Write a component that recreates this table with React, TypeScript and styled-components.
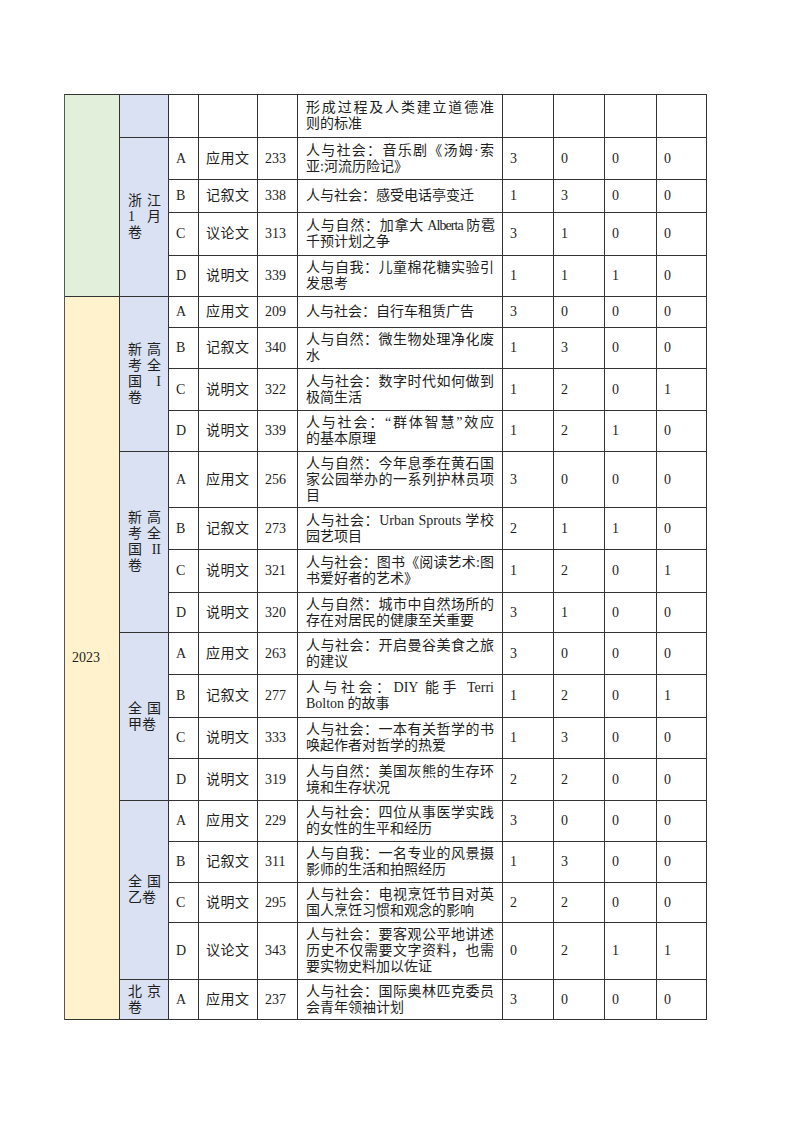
import React from 'react';
import styled, { createGlobalStyle } from 'styled-components';

const GlobalStyle = createGlobalStyle`
  html, body {
    margin: 0;
    padding: 0;
    background: #fff;
  }
  body {
    font-family: "Liberation Serif", "Noto Sans CJK SC", serif;
    color: #1e1e1e;
  }
`;

const COLS = [55, 49, 30, 59, 40, 205, 51, 51, 52, 50];
const ROW_HEIGHTS = [43, 42, 33, 43, 41, 31, 41, 42, 41, 56, 42, 43, 40, 42, 43, 41, 42, 41, 41, 40, 57, 40];

const GREEN = '#e2efda';
const YELLOW = '#fff2cc';
const BLUE = '#d9e1f2';

type Row = {
  part?: string;
  type?: string;
  words?: string;
  desc: string[];
  counts: string[];
  squeeze?: boolean;
};

const rows: Row[] = [
  { desc: ['形成过程及人类建立道德准', '则的标准'], counts: ['', '', '', ''] },
  { part: 'A', type: '应用文', words: '233', desc: ['人与社会：音乐剧《汤姆·索', '亚:河流历险记》'], counts: ['3', '0', '0', '0'] },
  { part: 'B', type: '记叙文', words: '338', desc: ['人与社会：感受电话亭变迁'], counts: ['1', '3', '0', '0'] },
  { part: 'C', type: '议论文', words: '313', desc: ['人与自然：加拿大 Alberta 防雹', '千预计划之争'], counts: ['3', '1', '0', '0'], squeeze: true },
  { part: 'D', type: '说明文', words: '339', desc: ['人与自我：儿童棉花糖实验引', '发思考'], counts: ['1', '1', '1', '0'] },
  { part: 'A', type: '应用文', words: '209', desc: ['人与社会：自行车租赁广告'], counts: ['3', '0', '0', '0'] },
  { part: 'B', type: '记叙文', words: '340', desc: ['人与自然：微生物处理净化废', '水'], counts: ['1', '3', '0', '0'] },
  { part: 'C', type: '说明文', words: '322', desc: ['人与社会：数字时代如何做到', '极简生活'], counts: ['1', '2', '0', '1'] },
  { part: 'D', type: '说明文', words: '339', desc: ['人与社会：“群体智慧”效应', '的基本原理'], counts: ['1', '2', '1', '0'] },
  { part: 'A', type: '应用文', words: '256', desc: ['人与自然：今年息季在黄石国', '家公园举办的一系列护林员项', '目'], counts: ['3', '0', '0', '0'] },
  { part: 'B', type: '记叙文', words: '273', desc: ['人与社会：Urban Sprouts 学校', '园艺项目'], counts: ['2', '1', '1', '0'] },
  { part: 'C', type: '说明文', words: '321', desc: ['人与社会：图书《阅读艺术:图', '书爱好者的艺术》'], counts: ['1', '2', '0', '1'] },
  { part: 'D', type: '说明文', words: '320', desc: ['人与自然：城市中自然场所的', '存在对居民的健康至关重要'], counts: ['3', '1', '0', '0'] },
  { part: 'A', type: '应用文', words: '263', desc: ['人与社会：开启曼谷美食之旅', '的建议'], counts: ['3', '0', '0', '0'] },
  { part: 'B', type: '记叙文', words: '277', desc: ['人与社会：DIY 能手 Terri', 'Bolton 的故事'], counts: ['1', '2', '0', '1'] },
  { part: 'C', type: '说明文', words: '333', desc: ['人与社会：一本有关哲学的书', '唤起作者对哲学的热爱'], counts: ['1', '3', '0', '0'] },
  { part: 'D', type: '说明文', words: '319', desc: ['人与自然：美国灰熊的生存环', '境和生存状况'], counts: ['2', '2', '0', '0'] },
  { part: 'A', type: '应用文', words: '229', desc: ['人与社会：四位从事医学实践', '的女性的生平和经历'], counts: ['3', '0', '0', '0'] },
  { part: 'B', type: '记叙文', words: '311', desc: ['人与自我：一名专业的风景摄', '影师的生活和拍照经历'], counts: ['1', '3', '0', '0'] },
  { part: 'C', type: '说明文', words: '295', desc: ['人与社会：电视烹饪节目对英', '国人烹饪习惯和观念的影响'], counts: ['2', '2', '0', '0'] },
  { part: 'D', type: '议论文', words: '343', desc: ['人与社会：要客观公平地讲述', '历史不仅需要文字资料，也需', '要实物史料加以佐证'], counts: ['0', '2', '1', '1'] },
  { part: 'A', type: '应用文', words: '237', desc: ['人与社会：国际奥林匹克委员', '会青年领袖计划'], counts: ['3', '0', '0', '0'] },
];

const years = [
  { label: '', start: 0, span: 5, color: GREEN },
  { label: '2023', start: 5, span: 17, color: YELLOW },
];

// each inner array is one line of the wrapped paper name, split into tokens
const papers = [
  { lines: [] as string[][], start: 0, span: 1 },
  { lines: [['浙', '江'], ['1', '月'], ['卷']], start: 1, span: 4 },
  { lines: [['新', '高'], ['考', '全'], ['国', 'I'], ['卷']], start: 5, span: 4 },
  { lines: [['新', '高'], ['考', '全'], ['国', 'II'], ['卷']], start: 9, span: 4 },
  { lines: [['全', '国'], ['甲卷']], start: 13, span: 4 },
  { lines: [['全', '国'], ['乙卷']], start: 17, span: 4 },
  { lines: [['北', '京'], ['卷']], start: 21, span: 1 },
];

const Page = styled.div`
  padding: 94px 0 0 64px;
  min-height: 1132px;
  box-sizing: border-box;
`;

const Grid = styled.div`
  display: grid;
  grid-template-columns: ${COLS.map((c) => `${c}px`).join(' ')};
  grid-template-rows: ${ROW_HEIGHTS.map((h) => `${h}px`).join(' ')};
  width: max-content;
  border-top: 1px solid #333;
  border-left: 1px solid #555;
  font-size: 14px;
  line-height: 16px;
`;

const Cell = styled.div<{ $bg?: string }>`
  box-sizing: border-box;
  border-right: 1px solid #333;
  border-bottom: 1px solid #333;
  padding: 0 7px;
  display: flex;
  flex-direction: column;
  justify-content: center;
  background: ${(p) => p.$bg ?? '#fff'};
  white-space: nowrap;
`;

const SpanCell = styled(Cell)<{ $col: number; $start: number; $span: number }>`
  grid-column: ${(p) => p.$col};
  grid-row: ${(p) => `${p.$start + 1} / span ${p.$span}`};
`;

const PaperBlock = styled.div`
  width: 33px;
  margin-left: 1px;
`;

const PaperLine = styled.div<{ $spread: boolean }>`
  display: flex;
  justify-content: ${(p) => (p.$spread ? 'space-between' : 'flex-start')};
`;

const DescCell = styled(Cell)`
  padding: 0 8px;
`;

const DescLine = styled.div<{ $justify: boolean; $squeeze?: boolean }>`
  text-align: ${(p) => (p.$justify ? 'justify' : 'left')};
  text-align-last: ${(p) => (p.$justify ? 'justify' : 'left')};
  white-space: nowrap;
  letter-spacing: ${(p) => (p.$squeeze ? '-0.9px' : 'normal')};
  word-spacing: ${(p) => (p.$squeeze ? '-1px' : 'normal')};
`;

const TypeText = styled.span`
  letter-spacing: 0.5px;
`;

export default function App() {
  return (
    <Page>
      <GlobalStyle />
      <Grid>
        {years.map((y) => (
          <SpanCell key={`y${y.start}`} $col={1} $start={y.start} $span={y.span} $bg={y.color}>
            {y.label}
          </SpanCell>
        ))}
        {papers.map((p) => (
          <SpanCell key={`p${p.start}`} $col={2} $start={p.start} $span={p.span} $bg={BLUE}>
            <PaperBlock>
              {p.lines.map((line, i) => (
                <PaperLine key={i} $spread={i < p.lines.length - 1}>
                  {line.map((tok, j) => (
                    <span key={j}>{tok}</span>
                  ))}
                </PaperLine>
              ))}
            </PaperBlock>
          </SpanCell>
        ))}
        {rows.map((r, i) => (
          <React.Fragment key={i}>
            <Cell>{r.part ?? ''}</Cell>
            <Cell>
              <TypeText>{r.type ?? ''}</TypeText>
            </Cell>
            <Cell>{r.words ?? ''}</Cell>
            <DescCell>
              {r.desc.map((line, j) => (
                <DescLine key={j} $justify={j < r.desc.length - 1} $squeeze={r.squeeze && j === 0}>
                  {line}
                </DescLine>
              ))}
            </DescCell>
            {r.counts.map((c, j) => (
              <Cell key={j}>{c}</Cell>
            ))}
          </React.Fragment>
        ))}
      </Grid>
    </Page>
  );
}
